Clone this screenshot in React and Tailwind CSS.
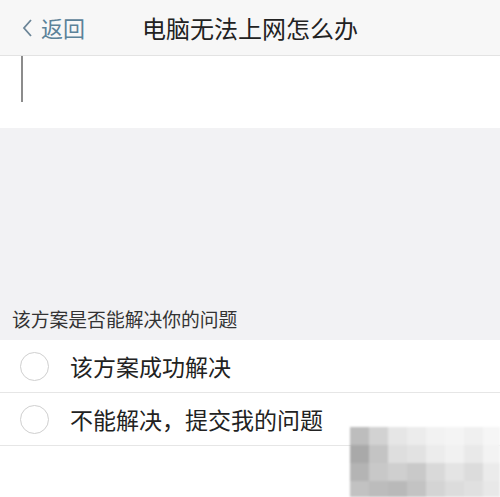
import React from "react";

const font = { fontFamily: '"Noto Sans CJK SC", "Noto Sans", sans-serif' };

const options = ["该方案成功解决", "不能解决，提交我的问题"];

// blurry mosaic in the lower right corner
const mosaic = [
  ["#bdbdbd", "#d2d2d2", "#e6e6e6", "#ececec", "#f2f2f2", "#f4f4f4", "#f0f0f0", "#f6f6f6"],
  ["#a9a9a9", "#c4c4c4", "#dedede", "#e2e2e2", "#ececec", "#f1f1f1", "#e9e9e9", "#f3f3f3"],
  ["#b4b4b4", "#c8c8c8", "#cfcfcf", "#c9c9c9", "#d9d9d9", "#e4e4e4", "#dcdcdc", "#ebebeb"],
  ["#c2c2c2", "#bcbcbc", "#b9b9b9", "#c3c3c3", "#d4d4d4", "#dcdcdc", "#e0e0e0", "#e8e8e8"],
];

function Mosaic() {
  return (
    <svg width="150" height="70" className="absolute right-0 bottom-0 blur-[1px]">
      {mosaic.map((row, r) =>
        row.map((c, i) => (
          <rect key={r + "-" + i} x={i * 19} y={r * 18} width="19" height="18" fill={c} />
        ))
      )}
    </svg>
  );
}

export default function App() {
  return (
    <div className="relative w-[500px] h-[497px] bg-white overflow-hidden" style={font}>
      <div className="h-14 bg-[#f7f7f7] border-b border-[#e3e3e3] flex items-center relative">
        <div className="flex items-center pl-[21px] text-[#5b8299] text-[22px] gap-[8px]">
          <svg width="12" height="22" viewBox="0 0 12 22">
            <path d="M10 3 L3 11 L10 19" fill="none" stroke="#6b8597" strokeWidth="1.8" />
          </svg>
          <span>返回</span>
        </div>
        <div className="absolute left-[142px] text-[24px] text-[#222]">电脑无法上网怎么办</div>
      </div>
      <div className="h-[72px] bg-white pl-[21px]">
        <div className="w-[2px] h-[46px] bg-[#8c8c8c]" />
      </div>
      <div className="h-[212px] bg-[#f2f2f4] flex items-end px-[12px] pb-[7px]">
        <span className="text-[18.8px] text-[#333]">该方案是否能解决你的问题</span>
      </div>
      <div className="bg-white">
        {options.map((o) => (
          <div key={o} className="h-[53px] flex items-center border-b border-[#e6e6e6]">
            <div className="ml-[20px] w-[29px] h-[29px] rounded-full border border-[#cfcfcf]" />
            <span className="ml-[21px] text-[23px] text-[#222]">{o}</span>
          </div>
        ))}
      </div>
      <Mosaic />
    </div>
  );
}
